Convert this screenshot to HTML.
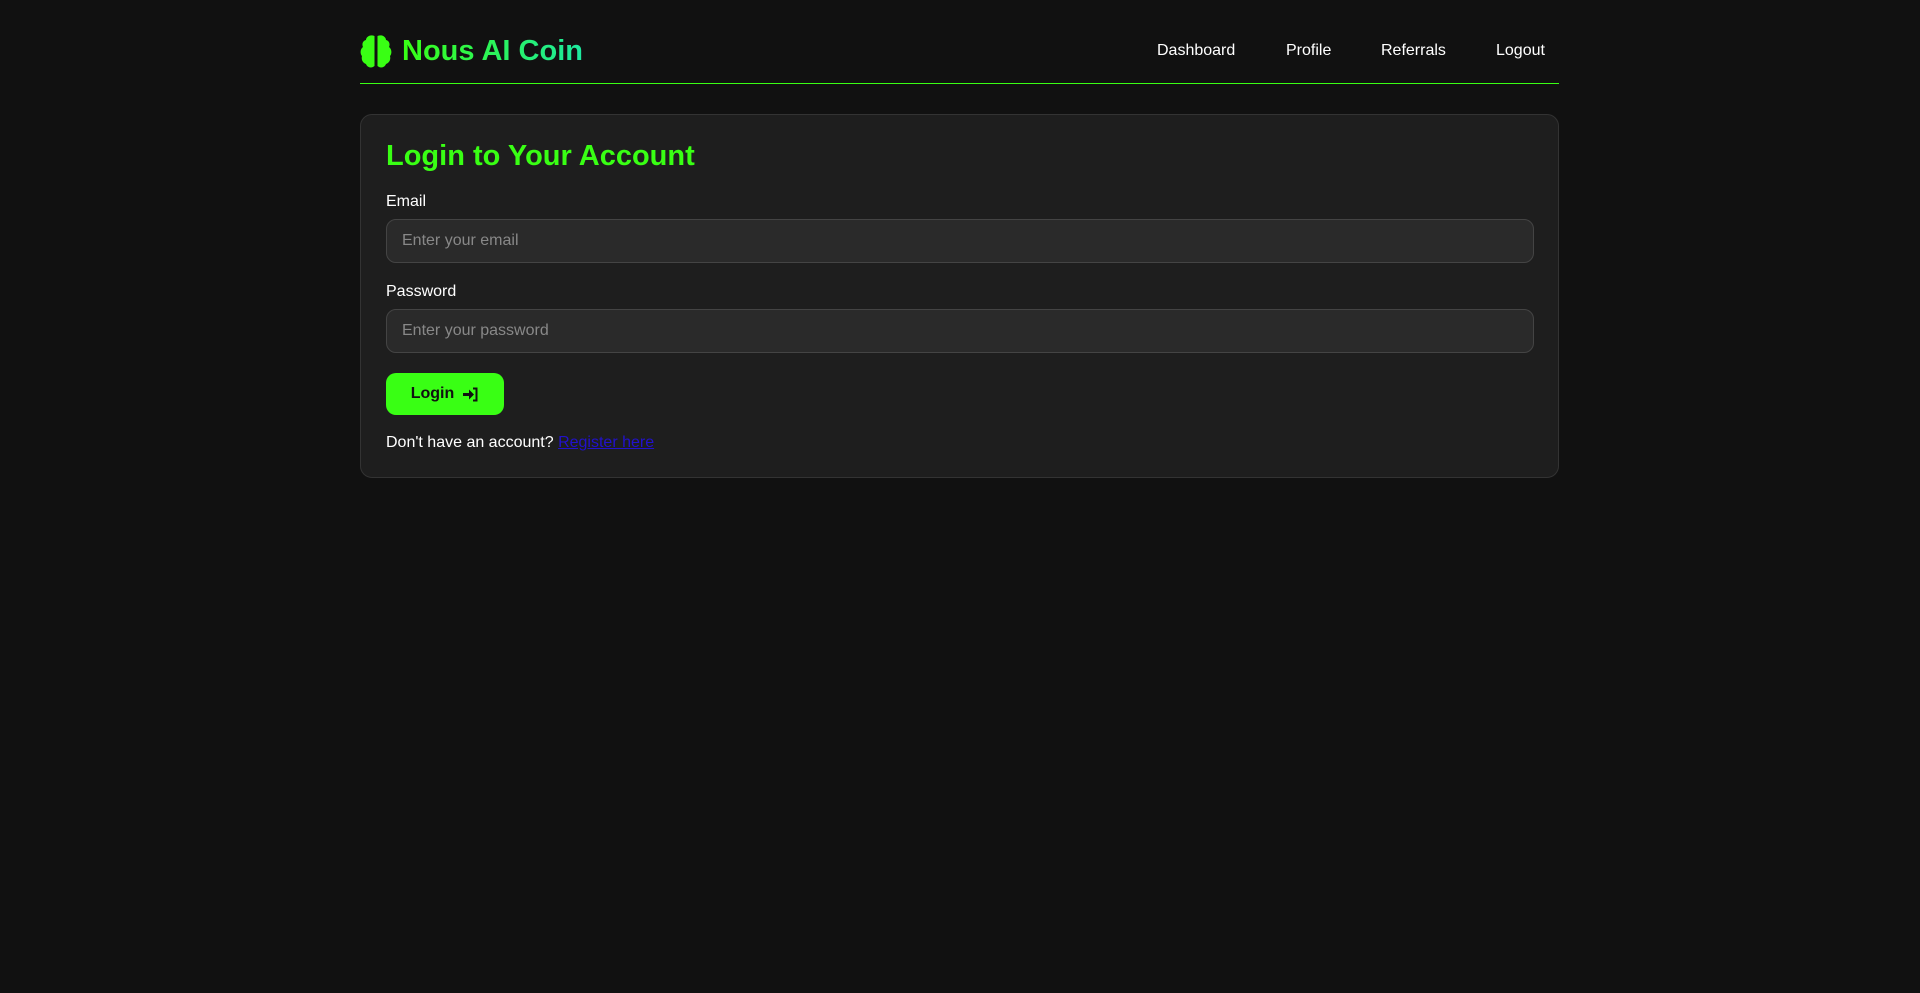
<!DOCTYPE html>
<html><head><meta charset="utf-8"><style>
*{box-sizing:border-box;margin:0;padding:0}
body{background:#111;width:1920px;height:993px;font-family:"Liberation Sans",sans-serif;color:#fff;position:relative;overflow:hidden}
.hdr{position:absolute;left:360px;top:0;width:1199px;height:84px;border-bottom:1px solid #39ff14}
.logo{position:absolute;left:0;top:34px;display:flex;align-items:center}
.logo span{font-size:29px;font-weight:bold;margin-left:10px;background:linear-gradient(90deg,#39ff14,#1de9a0);-webkit-background-clip:text;color:transparent}
.nav a{position:absolute;top:42px;font-size:16px;color:#fff;text-decoration:none}
.card{position:absolute;left:360px;top:114px;width:1199px;height:364px;background:#1e1e1e;border:1px solid #333;border-radius:12px}
h2{position:absolute;left:25px;top:25px;font-size:29px;color:#39ff14;font-weight:bold}
label{position:absolute;left:25px;font-size:16px}
.in{position:absolute;left:25px;width:1148px;height:44px;background:#2a2a2a;border:1px solid #444;border-radius:10px;font-size:16px;color:#888;padding:12px 15px}
.btn{position:absolute;left:25px;top:258px;width:118px;height:42px;background:#39ff14;border-radius:10px;color:#111;font-weight:bold;font-size:16px;display:flex;align-items:center;justify-content:center;gap:8px}
.reg{position:absolute;left:25px;top:319px;font-size:16px}
.reg a{color:#2211cc;text-decoration:underline}
</style></head><body>
<div class="hdr">
<div class="logo"><svg width="32" height="34" viewBox="0 0 32 34"><path d="M14.5 2 C10 0 6 3 6 6 C2 7 2 11 3 13 C0 15 0 20 2 22 C1 26 3 29 6 30 C7 33 11 35 14.5 32 Z M17.5 2 C22 0 26 3 26 6 C30 7 30 11 29 13 C32 15 32 20 30 22 C31 26 29 29 26 30 C25 33 21 35 17.5 32 Z" fill="#39ff14"/></svg><span>Nous AI Coin</span></div>
<div class="nav"><a style="left:797px">Dashboard</a><a style="left:926px">Profile</a><a style="left:1021px">Referrals</a><a style="left:1136px">Logout</a></div>
</div>
<div class="card">
<h2>Login to Your Account</h2>
<label style="top:78px">Email</label>
<div class="in" style="top:104px">Enter your email</div>
<label style="top:168px">Password</label>
<div class="in" style="top:194px">Enter your password</div>
<div class="btn">Login <svg width="17" height="15" viewBox="0 0 17 15"><path d="M1 6h6V2.5l5 5-5 5V9H1z" fill="#111"/><path d="M11 1.5h3.5v12H11" stroke="#111" stroke-width="2" fill="none"/></svg></div>
<div class="reg">Don't have an account? <a>Register here</a></div>
</div>
</body></html>
